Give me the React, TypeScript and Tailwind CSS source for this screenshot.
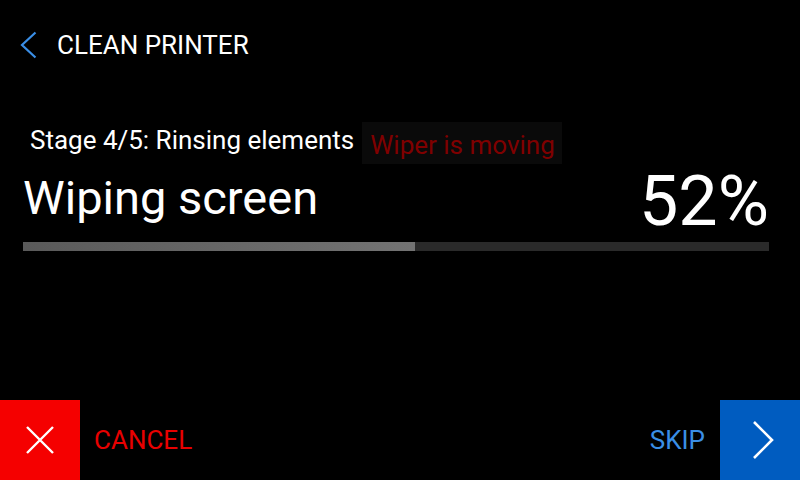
const progress = 52;

export default function App() {
  return (
    <div className="w-[800px] h-[480px] bg-black flex flex-col overflow-hidden text-white font-['Roboto',sans-serif]">
      {/* header */}
      <div className="h-[90px] flex items-center pl-[20px]">
        <svg width="18" height="28" viewBox="0 0 18 28" className="shrink-0">
          <path d="M15.5 1.5 L2 14 L15.5 26.5" fill="none" stroke="#3a8ee6" strokeWidth="2.2" />
        </svg>
        <span className="ml-[19px] text-[26px] leading-none">CLEAN PRINTER</span>
      </div>

      {/* progress */}
      <div className="flex-1 pl-[23px] pr-[31px] pt-[32px]">
        <div className="flex items-center h-[42px]">
          <span className="ml-[7px] mb-[6px] text-[26px] leading-none">Stage 4/5: Rinsing elements</span>
          <span className="ml-[8px] h-[42px] pl-[8px] pr-[7px] pt-[4px] flex items-center bg-[#0a0a0a] text-[#7f0000] text-[26px] leading-none">
            Wiper is moving
          </span>
        </div>
        <div className="flex items-start justify-between">
          <span className="mt-[10px] text-[47px] leading-none">Wiping screen</span>
          <span className="mt-[2px] text-[70px] leading-none">{progress}%</span>
        </div>
        <div className="mt-[6px] h-[9px] bg-[#2a2a2a]">
          <div
            className="h-full bg-gradient-to-r from-[#5a5a5a] to-[#737373]"
            style={{ width: `calc(${progress}% + 4px)` }}
          />
        </div>
      </div>

      {/* footer */}
      <div className="h-[80px] flex items-center">
        <button className="w-[80px] h-[80px] bg-[#f50000] flex items-center justify-center">
          <svg width="28" height="28" viewBox="0 0 28 28">
            <path d="M1 1 L27 27 M27 1 L1 27" stroke="#ffffff" strokeWidth="2.4" />
          </svg>
        </button>
        <span className="ml-[14px] text-[26px] leading-none text-[#e80000]">CANCEL</span>
        <div className="flex-1" />
        <span className="mr-[15px] text-[26px] leading-none text-[#3a8ee6]">SKIP</span>
        <button className="w-[80px] h-[80px] bg-[#005cc0] flex items-center justify-center">
          <svg width="24" height="40" viewBox="0 0 24 40" className="ml-[6px]">
            <path d="M3 2 L21 20 L3 38" fill="none" stroke="#ffffff" strokeWidth="2.6" />
          </svg>
        </button>
      </div>
    </div>
  );
}
